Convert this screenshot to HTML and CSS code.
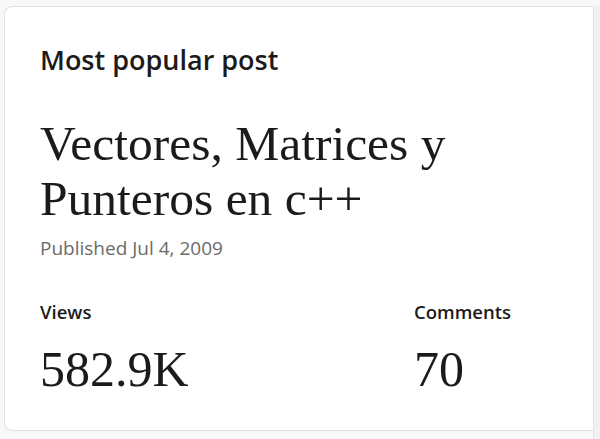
FILE: index.html
```html
<!DOCTYPE html>
<html>
<head>
<meta charset="utf-8">
<link rel="stylesheet" href="styles.css">
</head>
<body>
<div class="page">
  <section class="card">
    <h2 class="label">Most popular post</h2>
    <h1 class="title">Vectores, Matrices y<br>Punteros en c++</h1>
    <p class="date">Published Jul 4, 2009</p>
    <div class="stats">
      <div class="stat">
        <div class="stat-label">Views</div>
        <div class="stat-value">582.9K</div>
      </div>
      <div class="stat">
        <div class="stat-label">Comments</div>
        <div class="stat-value">70</div>
      </div>
    </div>
  </section>
  <div class="edge"></div>
</div>
</body>
</html>
```
FILE: styles.css
```css
html, body {
  margin: 0;
  padding: 0;
  background: #f8f8f8;
  width: 600px;
  height: 439px;
  overflow: hidden;
}
.page {
  display: flex;
  align-items: flex-start;
  padding: 6px 0 0 4px;
  height: 439px;
  box-sizing: border-box;
}
.card {
  flex: 1;
  height: 425px;
  box-sizing: border-box;
  background: #ffffff;
  border: 1px solid #e2e2e2;
  border-right: none;
  border-radius: 8px 0 0 8px;
  padding: 36px 0 0 35px;
  color: #1b1b1b;
}
.edge {
  width: 6px;
  height: 433px;
  background: #f1f1f1;
  border-left: 1px solid #e4e4e4;
  border-bottom: 1px solid #e4e4e4;
}
.label {
  margin: 0;
  font-family: "Open Sans", sans-serif;
  font-weight: 600;
  font-size: 27px;
  line-height: 34px;
}
.title {
  margin: 39px 0 0;
  font-family: "Liberation Serif", serif;
  font-weight: 400;
  font-size: 49.5px;
  line-height: 55px;
}
.date {
  margin: 9px 0 0;
  font-family: "Open Sans", sans-serif;
  font-size: 19px;
  line-height: 26px;
  color: #6b6b6b;
}
.stats {
  display: grid;
  grid-template-columns: 374px auto;
  margin-top: 39px;
}
.stat-label {
  font-family: "Open Sans", sans-serif;
  font-weight: 600;
  font-size: 18.5px;
  line-height: 24px;
}
.stat-value {
  margin-top: 17px;
  font-family: "Liberation Serif", serif;
  font-size: 50px;
  line-height: 56px;
}
```
